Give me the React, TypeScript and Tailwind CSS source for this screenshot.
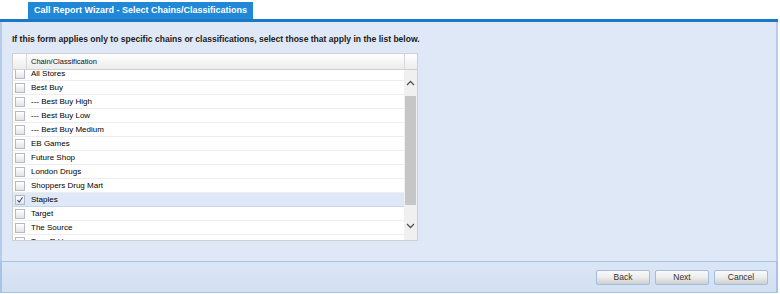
const ROWS = [
  { name: "All Stores" },
  { name: "Best Buy" },
  { name: "--- Best Buy High" },
  { name: "--- Best Buy Low" },
  { name: "--- Best Buy Medium" },
  { name: "EB Games" },
  { name: "Future Shop" },
  { name: "London Drugs" },
  { name: "Shoppers Drug Mart" },
  { name: "Staples", checked: true },
  { name: "Target" },
  { name: "The Source" },
  { name: "Toys R Us" },
];

function Check({ checked }: { checked?: boolean }) {
  return (
    <span className="flex h-[10px] w-[10px] items-center justify-center border border-[#b5b8c8] bg-gradient-to-b from-white to-[#e4e4e4]">
      {checked && (
        <svg width="8" height="8" viewBox="0 0 8 8">
          <path d="M1.5 4.2 L3.2 6.2 L6.6 1.2" fill="none" stroke="#2a4f8f" strokeWidth="1.1" />
        </svg>
      )}
    </span>
  );
}

function Btn({ label }: { label: string }) {
  return (
    <button className="h-[15px] w-[54px] rounded-[2px] border border-[#a3bde0] bg-gradient-to-b from-[#fafafa] via-[#ececec] to-[#cfcfcf] text-[8.5px] leading-none text-[#333]">
      {label}
    </button>
  );
}

export default function App() {
  return (
    <div className="h-[294px] w-[780px] bg-white font-['Liberation_Sans',Arial,sans-serif] text-black">
      <div className="flex h-[19px] items-end pl-[28px]">
        <div className="flex h-[17px] w-[225px] items-center justify-center bg-[#2088d6] text-[9px] font-bold text-white">
          Call Report Wizard - Select Chains/Classifications
        </div>
      </div>
      <div className="w-[778px]">
        <div className="h-[3px] bg-[#1c78c6]" />
        <div className="h-[239px] border-x-2 border-[#b7cdea] bg-[#dfe8f6] pl-[10px]">
          <p className="pt-[12px] text-[8.55px] font-bold leading-[10px] text-[#222]">
            If this form applies only to specific chains or classifications, select those that apply in the list below.
          </p>
          <div className="mt-[9px] flex h-[188px] w-[406px] flex-col border border-[#d0d0d0] bg-white">
            <div className="grid h-[16px] shrink-0 grid-cols-[14px_1fr_13px] border-b border-[#d0d0d0] bg-gradient-to-b from-white to-[#ececec] text-[7.5px] text-[#111]">
              <span className="border-r border-[#d8d8d8]" />
              <span className="flex items-center pl-[4px]">Chain/Classification</span>
              <span className="border-l border-[#d8d8d8]" />
            </div>
            <div className="flex min-h-0 flex-1">
              <div className="min-h-0 flex-1 overflow-hidden">
                <div className="-mt-[3px]">
                  {ROWS.map((r) => (
                    <div
                      key={r.name}
                      className={
                        r.checked
                          ? "flex h-[14px] items-center border-b border-[#c5d6ee] bg-[#dfe8f6] text-[8px]"
                          : "flex h-[14px] items-center border-b border-[#ededed] text-[8px]"
                      }
                    >
                      <div className="flex w-[14px] shrink-0 justify-center">
                        <Check checked={r.checked} />
                      </div>
                      <span className="pl-[4px]">{r.name}</span>
                    </div>
                  ))}
                </div>
              </div>
              <div className="flex w-[13px] shrink-0 flex-col items-center bg-[#f0f0f0]">
                <div className="flex h-[26px] w-full items-center justify-center">
                  <svg width="9" height="6" viewBox="0 0 9 6">
                    <path d="M1 5 L4.5 1.5 L8 5" fill="none" stroke="#555" strokeWidth="1.3" />
                  </svg>
                </div>
                <div className="h-[109px] w-[11px] bg-[#c6c6c6]" />
                <div className="flex w-full flex-1 items-end justify-center pb-[11px]">
                  <svg width="9" height="6" viewBox="0 0 9 6">
                    <path d="M1 1 L4.5 4.5 L8 1" fill="none" stroke="#555" strokeWidth="1.3" />
                  </svg>
                </div>
              </div>
            </div>
          </div>
        </div>
        <div className="flex h-[32px] items-center justify-end gap-[5px] border-x-2 border-y border-[#a9c3e6] bg-gradient-to-b from-[#dbe6f5] to-[#d3e0f2] pr-[8px]">
          <Btn label="Back" />
          <Btn label="Next" />
          <Btn label="Cancel" />
        </div>
      </div>
    </div>
  );
}
